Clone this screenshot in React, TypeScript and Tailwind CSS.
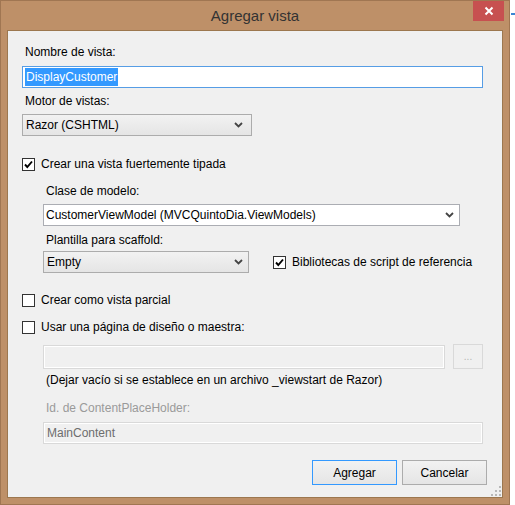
import React from 'react'

// Windows 8 style "Agregar vista" dialog

function Chevron() {
  return (
    <svg width="9" height="6" viewBox="0 0 9 6" className="shrink-0">
      <path d="M1 1 L4.5 4.5 L8 1" fill="none" stroke="#444" strokeWidth="1.8" />
    </svg>
  )
}

function CheckBox({ checked }: { checked?: boolean }) {
  return (
    <span className="w-[13px] h-[13px] border border-[#333] bg-white flex items-center justify-center shrink-0">
      {checked && (
        <svg width="11" height="11" viewBox="0 0 11 11">
          <path d="M2 5.5 L4.3 8 L9 2.5" fill="none" stroke="#000" strokeWidth="1.9" />
        </svg>
      )}
    </span>
  )
}

function Grip() {
  const dots = [
    [8, 0],
    [4, 4],
    [8, 4],
    [0, 8],
    [4, 8],
    [8, 8],
  ]
  return (
    <svg width="10" height="10" viewBox="0 0 10 10">
      {dots.map(([x, y], i) => (
        <rect key={i} x={x} y={y} width="2" height="2" fill="#b8b8b8" />
      ))}
    </svg>
  )
}

export default function App() {
  return (
    <div className="flex bg-white w-[515px] h-[505px] font-['Liberation_Sans',Arial,sans-serif] text-[12px] leading-[16px] text-black">
      {/* Window */}
      <div className="relative w-[510px] h-[505px] bg-[#BE9068] border border-[#A07652] flex flex-col">
        {/* Title bar */}
        <div className="h-[29px] flex items-center justify-center shrink-0">
          <span className="text-[15px] text-[#333] pt-[1px]">Agregar vista</span>
        </div>
        <div className="absolute top-0 right-[5px] w-[31px] h-[20px] bg-[#C75050] flex items-center justify-center">
          <svg width="10" height="10" viewBox="0 0 10 10">
            <path d="M1.5 1.5 L8.5 8.5 M8.5 1.5 L1.5 8.5" stroke="#fff" strokeWidth="2" />
          </svg>
        </div>

        {/* Client area */}
        <div className="mx-[6px] h-[468px] border border-[#9C774F] bg-[#F0F0F0] pl-[14px] pr-[19px] pt-[13px] flex flex-col relative">
          <div className="pl-[3px]">Nombre de vista:</div>
          <div className="mt-[6px] w-[461px] h-[22px] border border-[#569DE5] bg-white flex items-center pl-[2px]">
            <span className="bg-[#3399FF] text-white px-[1px] leading-[18px]">DisplayCustomer</span>
          </div>

          <div className="mt-[5px] pl-[3px]">Motor de vistas:</div>
          <div className="mt-[5px] w-[230px] h-[22px] border border-[#ACACAC] bg-gradient-to-b from-[#F2F2F2] to-[#E5E5E5] flex items-center justify-between pl-[3px] pr-[8px]">
            <span>Razor (CSHTML)</span>
            <Chevron />
          </div>

          <label className="mt-[20px] flex items-center gap-[6px]">
            <CheckBox checked />
            <span>Crear una vista fuertemente tipada</span>
          </label>

          {/* Strongly typed options */}
          <div className="pl-[21px] flex flex-col">
            <div className="mt-[11px] pl-[3px]">Clase de modelo:</div>
            <div className="mt-[5px] w-[417px] h-[22px] border border-[#ABADB3] bg-white flex items-center justify-between pl-[2px] pr-[5px]">
              <span>CustomerViewModel (MVCQuintoDia.ViewModels)</span>
              <Chevron />
            </div>
            <div className="mt-[6px] pl-[3px]">Plantilla para scaffold:</div>
            <div className="mt-[3px] flex items-center">
              <div className="w-[206px] h-[22px] border border-[#ACACAC] bg-gradient-to-b from-[#F2F2F2] to-[#E5E5E5] flex items-center justify-between pl-[3px] pr-[5px]">
                <span>Empty</span>
                <Chevron />
              </div>
              <label className="ml-[24px] flex items-center gap-[6px]">
                <CheckBox checked />
                <span>Bibliotecas de script de referencia</span>
              </label>
            </div>
          </div>

          <label className="mt-[19px] flex items-center gap-[6px]">
            <CheckBox />
            <span>Crear como vista parcial</span>
          </label>
          <label className="mt-[11px] flex items-center gap-[6px]">
            <CheckBox />
            <span>Usar una página de diseño o maestra:</span>
          </label>

          {/* Layout page options (disabled) */}
          <div className="pl-[21px] flex flex-col">
            <div className="mt-[9px] flex items-center gap-[8px]">
              <div className="w-[402px] h-[24px] border border-[#D9D9D9] bg-[#F0F0F0] shadow-[inset_0_0_0_1px_#fff]" />
              <div className="w-[30px] h-[25px] border border-[#D9D9D9] bg-[#F0F0F0] flex items-center justify-center text-[10px] text-[#b5b5b5]">
                ...
              </div>
            </div>
            <div className="mt-[3px] pl-[3px]">(Dejar vacío si se establece en un archivo _viewstart de Razor)</div>
            <div className="mt-[12px] pl-[3px] text-[#9A9A9A]">Id. de ContentPlaceHolder:</div>
            <div className="mt-[6px] w-[440px] h-[22px] border border-[#D9D9D9] bg-[#F0F0F0] shadow-[inset_0_0_0_1px_#fff] flex items-center pl-[3px] text-[#6D6D6D]">
              MainContent
            </div>
          </div>

          {/* Buttons */}
          <div className="mt-[16px] flex justify-end gap-[5px] pr-[-4px] mr-[-4px]">
            <button className="w-[85px] h-[25px] border border-[#3399FF] bg-gradient-to-b from-[#F2F2F2] to-[#E5E5E5] text-[12px]">
              Agregar
            </button>
            <button className="w-[85px] h-[25px] border border-[#ACACAC] bg-gradient-to-b from-[#F2F2F2] to-[#E5E5E5] text-[12px]">
              Cancelar
            </button>
          </div>

          <div className="absolute right-[1px] bottom-[1px]">
            <Grip />
          </div>
        </div>
      </div>
      {/* Edge of the window behind */}
      <div className="flex-1 pt-[13px]">
        <div className="h-[2px] ml-[1px] bg-[#3A86D4]" />
      </div>
    </div>
  )
}
